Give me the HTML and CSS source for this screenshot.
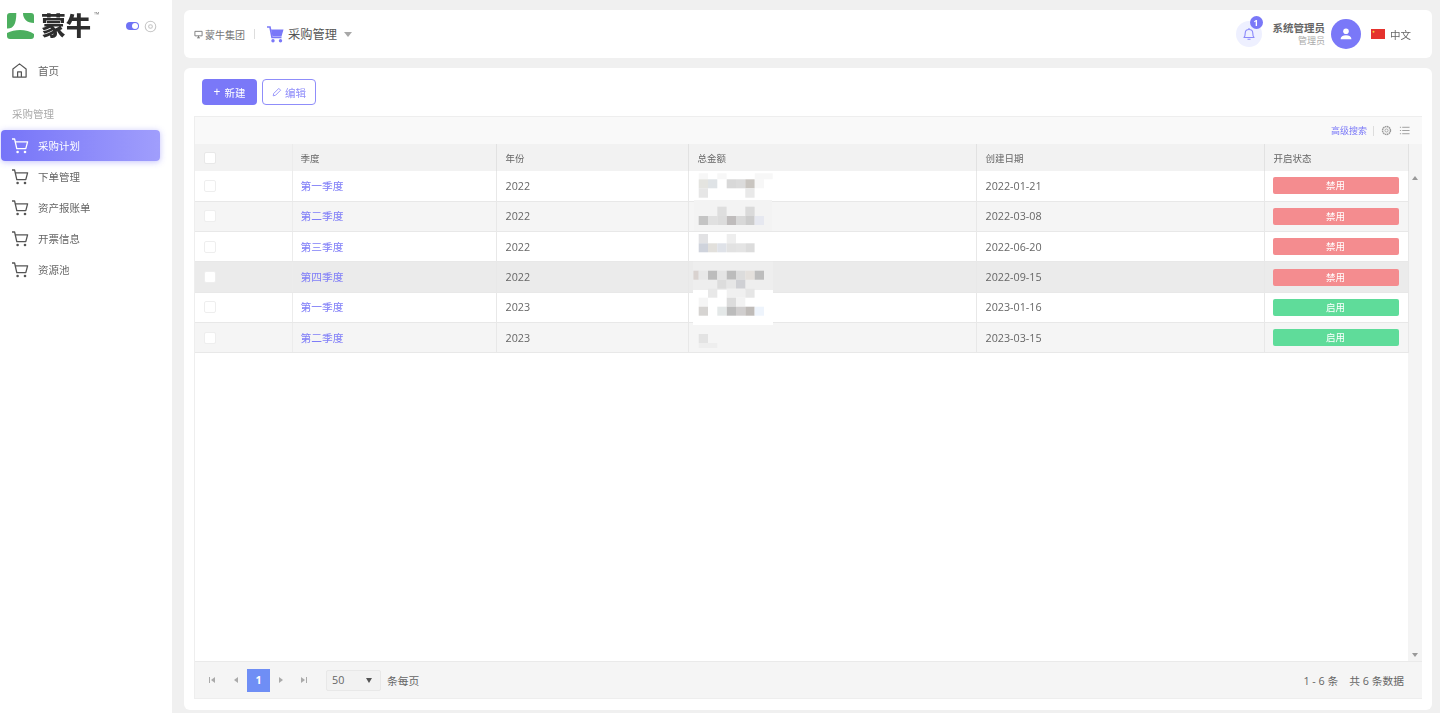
FILE: index.html
```html
<!DOCTYPE html>
<html lang="zh-CN">
<head>
<meta charset="utf-8">
<title>采购计划</title>
<link rel="stylesheet" href="styles.css">
</head>
<body>
<svg class="defs" width="0" height="0" aria-hidden="true">
  <symbol id="cart" viewBox="0 0 18 18">
    <path d="M1 2h2.6l2.2 9.6h9l1.8-6.8H4.4" fill="none" stroke="currentColor" stroke-width="1.3" stroke-linejoin="round"/>
    <circle cx="6.6" cy="15" r="1.3" fill="currentColor"/>
    <circle cx="14" cy="15" r="1.3" fill="currentColor"/>
  </symbol>
</svg>
<aside class="sidebar">
  <div class="brand">
    <svg class="logo-mark" viewBox="0 0 27 26" aria-hidden="true">
      <rect width="27" height="26" rx="3" fill="#4caf5f"/>
      <path d="M9.300 0H16C16 6 20 10 27 10V21C20 16 8 16 0 20V15.500C6 16 9.300 12 9.300 0Z" fill="#fff"/>
    </svg>
    <span class="logo-text">蒙牛</span>
    <span class="logo-tm">™</span>
    <span class="toggle"><i></i></span>
    <svg class="target" viewBox="0 0 14 14" aria-hidden="true">
      <circle cx="7" cy="7" r="5.700" fill="none" stroke="#c4c4c4" stroke-width="1.100"/>
      <circle cx="7" cy="7" r="2" fill="none" stroke="#c4c4c4" stroke-width="1.100"/>
    </svg>
  </div>
  <a class="nav-item home">
    <svg class="nav-icon" viewBox="0 0 18 18" aria-hidden="true">
      <path d="M2 7.500 9 2l7 5.500V16H2z M7 16v-5.500h4V16" fill="none" stroke="currentColor" stroke-width="1.300" stroke-linejoin="round"/>
    </svg>
    <span>首页</span>
  </a>
  <div class="nav-label">采购管理</div>
  <a class="nav-item active"><svg class="nav-icon"><use href="#cart"/></svg><span>采购计划</span></a>
  <a class="nav-item"><svg class="nav-icon"><use href="#cart"/></svg><span>下单管理</span></a>
  <a class="nav-item"><svg class="nav-icon"><use href="#cart"/></svg><span>资产报账单</span></a>
  <a class="nav-item"><svg class="nav-icon"><use href="#cart"/></svg><span>开票信息</span></a>
  <a class="nav-item"><svg class="nav-icon"><use href="#cart"/></svg><span>资源池</span></a>
</aside>
<main class="main">
  <header class="topbar">
    <svg class="org-icon" viewBox="0 0 10 10" aria-hidden="true">
      <path d="M1 1.500h8v5H1z M5 6.500v2.200 M3.300 8.700h3.400" fill="none" stroke="#777" stroke-width="1"/>
    </svg>
    <span class="org">蒙牛集团</span>
    <span class="divider"></span>
    <svg class="module-icon" viewBox="0 0 17 17" aria-hidden="true">
      <path d="M4 3.500H16.500L14.500 10.500H5.500Z" fill="#7a78f8"/>
      <path d="M0 1H3L5 11.500H14.500" fill="none" stroke="#7a78f8" stroke-width="1.600"/>
      <circle cx="6" cy="14.800" r="1.700" fill="#7a78f8"/>
      <circle cx="13.500" cy="14.800" r="1.700" fill="#7a78f8"/>
    </svg>
    <span class="module">采购管理</span>
    <span class="caret"></span>
    <div class="spacer"></div>
    <div class="bell">
      <svg viewBox="0 0 14 14" aria-hidden="true">
        <path d="M2 10.500c1-1 1.200-2 1.200-4.200C3.200 4 5 2.500 7 2.500s3.800 1.500 3.800 3.800c0 2.200.2 3.200 1.200 4.200z M5.500 12.300h3 M7 1v1.500" fill="none" stroke="#8a88fa" stroke-width="1.100" stroke-linejoin="round"/>
      </svg>
      <span class="badge">1</span>
    </div>
    <div class="user">
      <strong>系统管理员</strong>
      <small>管理员</small>
    </div>
    <div class="avatar">
      <svg viewBox="0 0 16 16" aria-hidden="true">
        <circle cx="8" cy="4.800" r="3.200" fill="#fff"/>
        <path d="M1.800 14c0-3.200 2.500-4.700 6.200-4.700s6.200 1.500 6.200 4.700z" fill="#fff"/>
      </svg>
    </div>
    <svg class="flag" viewBox="0 0 14 10" aria-hidden="true">
      <rect width="14" height="10" fill="#e5322d"/>
      <circle cx="2.500" cy="2.800" r="1" fill="#f6d040"/>
    </svg>
    <span class="lang">中文</span>
  </header>
  <section class="content">
    <div class="actions">
      <button class="btn primary"><span class="plus">+</span>新建</button>
      <button class="btn outline">
        <svg viewBox="0 0 10 10" aria-hidden="true"><path d="M1.200 8.800 1.700 6.500 6.800 1.400l1.800 1.800-5.100 5.100z" fill="none" stroke="#8f8dfa" stroke-width=".9"/></svg>
        编辑
      </button>
    </div>
    <div class="grid-box">
      <div class="grid-tools">
        <a class="adv">高级搜索</a>
        <span class="tool-sep"></span>
        <svg class="tool-icon" viewBox="0 0 12 12" aria-hidden="true">
          <circle cx="6" cy="6" r="4.300" fill="none" stroke="#999" stroke-width="1.600" stroke-dasharray="1.700 .55"/>
          <circle cx="6" cy="6" r="1.700" fill="none" stroke="#999" stroke-width=".9"/>
        </svg>
        <svg class="tool-icon list" viewBox="0 0 12 12" aria-hidden="true">
          <path d="M3.500 2.500H11.500M3.500 6H11.500M3.500 9.500H11.500M1 2.500H2.300M1 6H2.300M1 9.500H2.300" stroke="#999" stroke-width="1"/>
        </svg>
      </div>
      <div class="grid-body">
        <div class="grid-scroll">
          <table class="grid">
            <colgroup>
              <col class="c-check"><col class="c-quarter"><col class="c-year"><col class="c-amount"><col class="c-date"><col class="c-state">
            </colgroup>
            <thead>
              <tr><th><span class="check head"></span></th><th>季度</th><th>年份</th><th>总金额</th><th>创建日期</th><th>开启状态</th></tr>
            </thead>
            <tbody>
              <tr><td><span class="check"></span></td><td><a>第一季度</a></td><td>2022</td><td></td><td>2022-01-21</td><td><span class="state off">禁用</span></td></tr>
              <tr class="even"><td><span class="check"></span></td><td><a>第二季度</a></td><td>2022</td><td></td><td>2022-03-08</td><td><span class="state off">禁用</span></td></tr>
              <tr><td><span class="check"></span></td><td><a>第三季度</a></td><td>2022</td><td></td><td>2022-06-20</td><td><span class="state off">禁用</span></td></tr>
              <tr class="hover"><td><span class="check"></span></td><td><a>第四季度</a></td><td>2022</td><td></td><td>2022-09-15</td><td><span class="state off">禁用</span></td></tr>
              <tr><td><span class="check"></span></td><td><a>第一季度</a></td><td>2023</td><td></td><td>2023-01-16</td><td><span class="state on">启用</span></td></tr>
              <tr class="even"><td><span class="check"></span></td><td><a>第二季度</a></td><td>2023</td><td></td><td>2023-03-15</td><td><span class="state on">启用</span></td></tr>
            </tbody>
          </table>
          <svg class="mosaic" width="84" height="186" viewBox="0 0 84 186" aria-hidden="true">
            <g fill="#f7f7f7"><rect x="6.700" y="3.300" width="9.300" height="6"/><rect x="25.300" y="3.300" width="9.300" height="6"/><rect x="62.700" y="3.300" width="18" height="6"/><rect x="62.700" y="9.300" width="9.300" height="9"/></g>
            <rect x="6.700" y="9.300" width="9.300" height="9" fill="#e4e4e0"/><rect x="16" y="9.300" width="9.300" height="9" fill="#dfe3e6"/><rect x="34.700" y="9.300" width="9.300" height="9" fill="#d8d8d8"/><rect x="44" y="9.300" width="9.300" height="9" fill="#dbdbdb"/><rect x="53.300" y="9.300" width="9.300" height="9" fill="#c9c5c0"/>
            <rect x="6.700" y="18.300" width="9.300" height="9.400" fill="#e6e6e6"/><rect x="53.300" y="18.300" width="9.300" height="9.400" fill="#e9e9e9"/>
            <rect x="2" y="30" width="78" height="31" fill="#f3f3f3"/>
            <rect x="25.300" y="36.700" width="9.300" height="9.300" fill="#dedede"/><rect x="53.300" y="36.700" width="9.300" height="9.300" fill="#dadada"/>
            <rect x="6.700" y="46" width="9.300" height="9" fill="#c4c4c4"/><rect x="16" y="46" width="9.300" height="9" fill="#e0e0e0"/><rect x="25.300" y="46" width="9.300" height="9" fill="#dcdcdc"/><rect x="34.700" y="46" width="9.300" height="9" fill="#bfbcbc"/><rect x="44" y="46" width="9.300" height="9" fill="#d8d8d8"/><rect x="53.300" y="46" width="9.300" height="9" fill="#cccccc"/><rect x="62.700" y="46" width="9.300" height="9" fill="#e6e8f0"/>
            <rect x="6.700" y="64" width="9.300" height="9.300" fill="#e2e2e4"/><rect x="34.700" y="64" width="9.300" height="9.300" fill="#eeeeee"/>
            <rect x="6.700" y="73.300" width="9.300" height="9" fill="#cfd3dc"/><rect x="16" y="73.300" width="9.300" height="9" fill="#e2e0dc"/><rect x="25.300" y="73.300" width="9.300" height="9" fill="#dfe2e8"/><rect x="34.700" y="73.300" width="9.300" height="9" fill="#e2e2e2"/><rect x="44" y="73.300" width="9.300" height="9" fill="#e4e4e4"/><rect x="53.300" y="73.300" width="9.300" height="9" fill="#dcdcdc"/>
            <rect x="1" y="91.700" width="80" height="31" fill="#eeeeee"/>
            <rect x="1.400" y="100.700" width="5.300" height="9" fill="#d9d2cf"/><rect x="6.700" y="100.700" width="9.300" height="9" fill="#e8e8e8"/><rect x="16" y="100.700" width="9.300" height="9" fill="#bcbcbc"/><rect x="25.300" y="100.700" width="9.300" height="9" fill="#e4e4e4"/><rect x="34.700" y="100.700" width="9.300" height="9" fill="#bcbcbc"/><rect x="44" y="100.700" width="9.300" height="9" fill="#dcdcdc"/><rect x="53.300" y="100.700" width="9.300" height="9" fill="#e4e0dc"/><rect x="62.700" y="100.700" width="9.300" height="9" fill="#bdbdbd"/>
            <rect x="25.300" y="109.700" width="9.300" height="9" fill="#dcdcdc"/><rect x="34.700" y="109.700" width="9.300" height="9" fill="#e6e6e6"/><rect x="44" y="109.700" width="9.300" height="9" fill="#cfd0d4"/>
            <rect x="1" y="120" width="80" height="35" fill="#ffffff"/>
            <rect x="16" y="118.700" width="9.300" height="9" fill="#e8e8e8"/><rect x="34.700" y="118.700" width="18.600" height="9" fill="#f0f0f0"/><rect x="53.300" y="118.700" width="9.300" height="9" fill="#e6e6e6"/>
            <rect x="6.700" y="127.700" width="9.300" height="9" fill="#f5f5f5"/><rect x="34.700" y="127.700" width="9.300" height="9" fill="#dcdcdc"/><rect x="44" y="127.700" width="9.300" height="9" fill="#f2f2f2"/>
            <rect x="6.700" y="136.700" width="9.300" height="9" fill="#d6d4d2"/><rect x="25.300" y="136.700" width="9.300" height="9" fill="#e4e8e8"/><rect x="34.700" y="136.700" width="9.300" height="9" fill="#bcbcbc"/><rect x="44" y="136.700" width="9.300" height="9" fill="#d0cece"/><rect x="53.300" y="136.700" width="9.300" height="9" fill="#bfbbb8"/><rect x="62.700" y="136.700" width="9.300" height="9" fill="#eef4fc"/>
            <rect x="6.700" y="164" width="9.300" height="9" fill="#e3e3e3"/><rect x="6.700" y="173" width="18.600" height="5" fill="#eeeeee"/>
          </svg>
        </div>
        <div class="scrollbar">
          <span class="arrow up"></span>
          <span class="arrow down"></span>
        </div>
      </div>
      <footer class="pager">
        <span class="pg-icon"><i class="bar"></i><i class="tri left"></i></span>
        <span class="pg-icon"><i class="tri left"></i></span>
        <span class="page-num">1</span>
        <span class="pg-icon"><i class="tri right"></i></span>
        <span class="pg-icon last"><i class="tri right"></i><i class="bar"></i></span>
        <span class="page-size">50<i class="tri down"></i></span>
        <span class="per-page">条每页</span>
        <div class="spacer"></div>
        <span class="range">1 - 6 条</span>
        <span class="total">共 6 条数据</span>
      </footer>
    </div>
  </section>
</main>
</body>
</html>
```
FILE: styles.css
```css
* { box-sizing: border-box; }
html, body { height: 100%; }
body {
  margin: 0;
  height: 713px;
  overflow: hidden;
  display: flex;
  background: #f0f0f0;
  color: #666;
  font-family: "Open Sans", "Noto Sans CJK SC", sans-serif;
  font-size: 10.75px;
}
.defs { position: absolute; }
.spacer { flex: 1; }

/* the reference is a soft, slightly out-of-focus capture */
.sidebar, .main { filter: blur(.5px); }

/* sidebar */
.sidebar {
  width: 172px;
  flex: none;
  background: #fff;
  padding-top: 12px;
}
.brand {
  display: flex;
  align-items: center;
  height: 27px;
  padding-left: 7px;
  margin-bottom: 16px;
}
.logo-mark { width: 27px; height: 26px; flex: none; }
.logo-text {
  margin-left: 7px;
  width: 52px;
  font-size: 25px;
  line-height: 27px;
  font-weight: 900;
  color: #2d2d2d;
  white-space: nowrap;
}
.logo-tm { font-size: 7px; color: #777; align-self: flex-start; margin-left: 1px; margin-top: -2px; width: 32px; flex: none; }
.toggle {
  width: 13px;
  height: 8px;
  border-radius: 4px;
  background: #6f72f5;
  display: flex;
  justify-content: flex-end;
  align-items: center;
  padding-right: 1px;
  margin-top: 1px;
}
.toggle i { width: 6px; height: 6px; border-radius: 50%; background: #fff; }
.target { width: 13px; height: 13px; margin-left: 5px; margin-top: 1px; }
.nav-item {
  display: flex;
  align-items: center;
  height: 31px;
  padding-left: 11px;
  color: #666;
  font-size: 10.5px;
}
.nav-item span { margin-left: 9px; }
.nav-icon { width: 18px; height: 18px; flex: none; color: #555; }
.nav-item.home { margin-bottom: 13px; }
.nav-item.home .nav-icon { width: 17px; height: 17px; margin-right: 1px; }
.nav-label { height: 31px; line-height: 30px; padding-left: 12px; color: #aaa; font-size: 10.5px; }
.nav-item.active {
  margin: 0 12px 0 1px;
  padding-left: 10px;
  border-radius: 4px;
  color: #fff;
  background: linear-gradient(90deg, #7674f8, #a09efc);
  box-shadow: 0 1px 6px rgba(122, 120, 248, .45);
}
.nav-item.active .nav-icon { color: #fff; }

/* main column */
.main {
  flex: 1;
  min-width: 0;
  display: flex;
  flex-direction: column;
  gap: 10px;
  padding: 10px 8px 3px 12px;
}
.topbar {
  height: 48px;
  flex: none;
  display: flex;
  align-items: center;
  background: #fff;
  border-radius: 6px;
  padding: 0 21px 0 10px;
}
.org-icon { width: 9px; height: 9px; margin-top: 1px; }
.org { margin-left: 2px; font-size: 10px; color: #777; }
.divider { width: 1px; height: 10px; background: #ddd; margin: 0 12px 0 9px; }
.module-icon { width: 17px; height: 17px; }
.module { margin-left: 4px; font-size: 12.25px; color: #555; }
.caret {
  margin-left: 7px;
  margin-top: 1px;
  border: 4.500px solid transparent;
  border-top: 5px solid #a8a8a8;
  border-bottom: 0;
}
.bell {
  position: relative;
  width: 26px;
  height: 26px;
  border-radius: 50%;
  background: #eef0ff;
  display: flex;
  align-items: center;
  justify-content: center;
}
.bell svg { width: 14px; height: 14px; }
.badge {
  position: absolute;
  top: -5px;
  right: -1px;
  width: 13px;
  height: 13px;
  border-radius: 50%;
  background: #7a78f8;
  color: #fff;
  font-size: 8.500px;
  font-weight: 700;
  line-height: 13px;
  text-align: center;
}
.user { display: flex; flex-direction: column; align-items: flex-end; margin-left: 11px; }
.user strong { font-size: 10.500px; line-height: 14px; font-weight: 700; color: #666; }
.user small { font-size: 9px; line-height: 12px; color: #aaa; }
.avatar {
  width: 30px;
  height: 30px;
  margin-left: 6px;
  border-radius: 50%;
  background: #7a78f8;
  display: flex;
  align-items: center;
  justify-content: center;
}
.avatar svg { width: 14px; height: 14px; }
.flag { width: 14px; height: 10px; margin-left: 10px; }
.lang { margin-left: 5px; font-size: 10.500px; color: #666; }

/* content card */
.content {
  flex: 1;
  min-height: 0;
  display: flex;
  flex-direction: column;
  background: #fff;
  border-radius: 6px;
  padding: 11px 10px 11px 10px;
}
.actions { display: flex; gap: 5px; height: 26px; margin-left: 8px; margin-bottom: 11px; flex: none; }
.btn {
  height: 26px;
  width: 55px;
  padding: 0;
  display: flex;
  align-items: center;
  justify-content: center;
  border-radius: 4px;
  font-family: inherit;
  font-size: 10.500px;
}
.btn.primary { border: 0; background: #7a78f8; color: #fff; }
.plus { margin-right: 4px; font-size: 12px; line-height: 1; }
.btn.outline { width: 54px; border: 1px solid #8f8dfa; background: #fff; color: #8f8dfa; }
.btn.outline svg { width: 10px; height: 10px; margin-right: 3px; }

.grid-box {
  flex: 1;
  min-height: 0;
  display: flex;
  flex-direction: column;
  border: 1px solid #eee;
  border-right: 0;
}
.grid-tools {
  height: 27px;
  flex: none;
  display: flex;
  align-items: center;
  justify-content: flex-end;
  background: #f9f9f9;
  padding-right: 12px;
}
.adv { font-size: 9px; color: #7a78f8; }
.tool-sep { width: 1px; height: 10px; background: #ddd; margin: 0 7px 0 6px; }
.tool-icon { width: 11px; height: 11px; }
.tool-icon.list { margin-left: 7px; }
.grid-body { flex: 1; min-height: 0; display: flex; }
.grid-scroll { flex: 1; min-width: 0; position: relative; }
.grid { width: 1213px; border-collapse: collapse; table-layout: fixed; }
.c-check { width: 97px; }
.c-quarter { width: 204px; }
.c-year { width: 192px; }
.c-amount { width: 288px; }
.c-date { width: 288px; }
.c-state { width: 144px; }
.grid th {
  height: 27px;
  padding: 0 9px;
  background: #f2f2f2;
  border-right: 1px solid #e2e2e2;
  font-weight: 400;
  font-size: 9.500px;
  text-align: left;
  color: #666;
}
.grid td {
  height: 30.330px;
  padding: 0 9px;
  border-bottom: 1px solid #e8e8e8;
  border-right: 1px solid #e8e8e8;
  color: #666;
}
.grid td a { display: block; padding-bottom: 1px; color: #7f7df8; }
.grid th:first-child, .grid td:first-child { border-right: 1px solid #ececec; }
.grid th:nth-child(2), .grid td:nth-child(2), .grid td:last-child { padding-left: 8px; }
.even td { background: #f5f5f5; }
.hover td { background: #ebebeb; }
.check {
  display: block;
  width: 12px;
  height: 12px;
  border: 1px solid #eee;
  border-radius: 2px;
  background: #fff;
}
.check.head { border-color: #e8e8e8; }
.state {
  display: block;
  height: 17px;
  line-height: 17px;
  border-radius: 2px;
  text-align: center;
  color: #fff;
  font-size: 9.500px;
}
.state.off { background: #f48c8f; }
.state.on { background: #5fdc9a; }
.mosaic { position: absolute; left: 497px; top: 26px; }
.scrollbar {
  width: 14px;
  flex: none;
  background: #f4f4f4;
  display: flex;
  flex-direction: column;
  justify-content: space-between;
  align-items: center;
  padding: 32px 0 4px;
}
.arrow { border: 3px solid transparent; }
.arrow.up { border-top: 0; border-bottom: 4px solid #999; }
.arrow.down { border-bottom: 0; border-top: 4px solid #999; }

/* pager */
.pager {
  height: 37px;
  flex: none;
  display: flex;
  align-items: center;
  background: #f5f5f5;
  border-top: 1px solid #eaeaea;
  padding: 0 18px 0 6px;
}
.pg-icon {
  width: 21px;
  display: flex;
  align-items: center;
  justify-content: center;
  gap: 1px;
  margin-right: 3px;
}
.pg-icon.last { margin-left: -1px; }
.bar { width: 1px; height: 6px; background: #aaa; }
.tri { border: 3px solid transparent; }
.tri.left { border-left: 0; border-right: 4px solid #aaa; }
.tri.right { border-right: 0; border-left: 4px solid #aaa; }
.tri.down { border-bottom: 0; border-top: 5px solid #555; border-left-width: 3.500px; border-right-width: 3.500px; }
.page-num {
  width: 23px;
  height: 23px;
  margin: 0 0 0 -2px;
  background: #6f8ef5;
  color: #fff;
  font-weight: 700;
  line-height: 23px;
  text-align: center;
}
.page-size {
  width: 55px;
  height: 21px;
  margin-left: 9px;
  padding: 0 8px 0 5px;
  display: flex;
  align-items: center;
  justify-content: space-between;
  background: #f2f2f2;
  border: 1px solid #e8e8e8;
  border-radius: 2px;
}
.per-page { margin-left: 6px; }
.total { margin-left: 11px; }
```
